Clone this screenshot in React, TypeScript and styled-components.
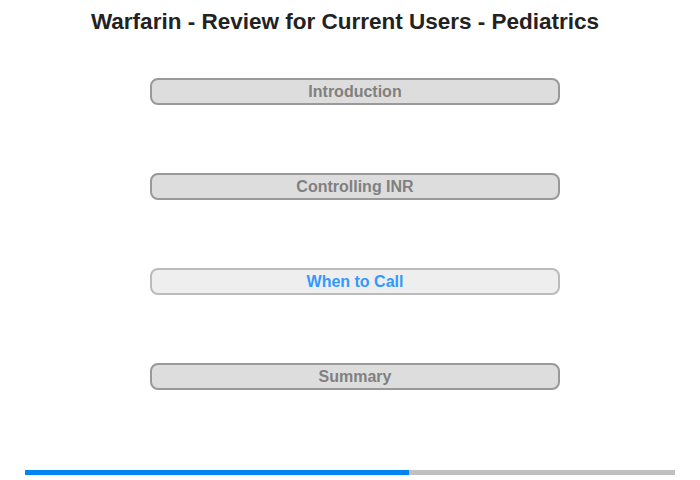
import React from "react";
import styled, { createGlobalStyle } from "styled-components";

const Global = createGlobalStyle`
  html, body { margin: 0; padding: 0; background: #fff; }
  body { font-family: "Liberation Sans", Arial, sans-serif; }
`;

const Page = styled.div`
  width: 700px;
  height: 480px;
  display: flex;
  flex-direction: column;
  box-sizing: border-box;
  padding-top: 9px;
`;

const Title = styled.h1`
  margin: 0;
  padding-right: 10px;
  font-family: "Liberation Sans", Arial, sans-serif;
  font-size: 22.5px;
  line-height: 25px;
  font-weight: bold;
  color: #222;
  text-align: center;
`;

const Menu = styled.nav`
  display: flex;
  flex-direction: column;
  gap: 68px;
  width: 410px;
  margin: 44px 0 0 150px;
`;

const MenuButton = styled.button<{ $active?: boolean }>`
  box-sizing: border-box;
  height: 27px;
  width: 100%;
  padding: 0;
  border-radius: 8px;
  border: 2px solid ${(p) => (p.$active ? "#bbbbbb" : "#999999")};
  background: ${(p) => (p.$active ? "#eeeeee" : "#dddddd")};
  color: ${(p) => (p.$active ? "#3399ff" : "#808080")};
  font-family: "Liberation Sans", Arial, sans-serif;
  font-size: 16px;
  font-weight: bold;
  line-height: 23px;
  text-align: center;
  cursor: pointer;
`;

const Progress = styled.div`
  margin: 80px 0 0 25px;
  width: 650px;
  height: 5px;
  background: #c0c0c0;
  display: flex;
`;

const ProgressFill = styled.div`
  height: 100%;
  background: #0084f4;
`;

const items = [
  { label: "Introduction", active: false },
  { label: "Controlling INR", active: false },
  { label: "When to Call", active: true },
  { label: "Summary", active: false },
];

export default function App() {
  const progress = 384 / 650;
  return (
    <>
      <Global />
      <Page>
        <Title>Warfarin - Review for Current Users - Pediatrics</Title>
        <Menu>
          {items.map((it) => (
            <MenuButton key={it.label} $active={it.active}>
              {it.label}
            </MenuButton>
          ))}
        </Menu>
        <Progress>
          <ProgressFill style={{ width: `${progress * 100}%` }} />
        </Progress>
      </Page>
    </>
  );
}
